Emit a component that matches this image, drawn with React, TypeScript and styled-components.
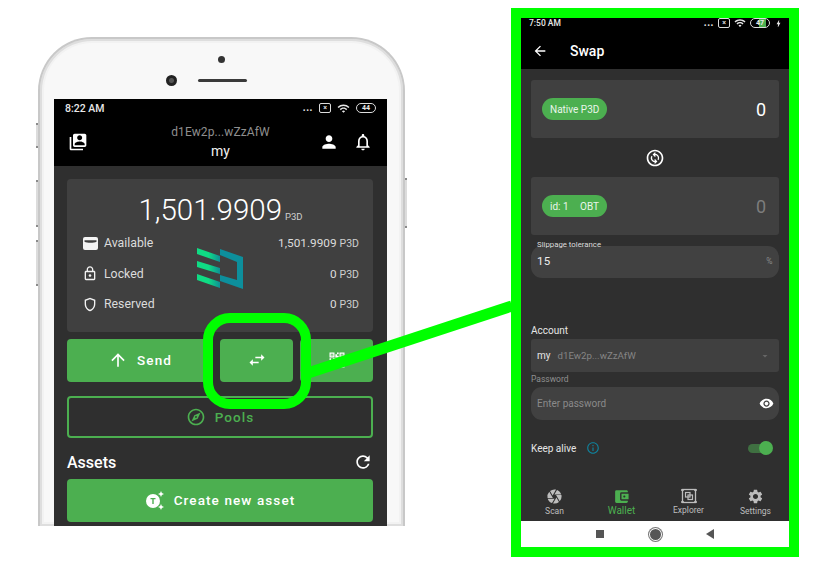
import React from "react";
import styled, { createGlobalStyle } from "styled-components";
import {
  MdSwitchAccount,
  MdPerson,
  MdOutlineNotifications,
  MdOutlineLock,
  MdOutlineShield,
  MdArrowUpward,
  MdSwapHoriz,
  MdOutlineExplore,
  MdRefresh,
  MdQrCode2,
  MdOutlineChangeCircle,
  MdArrowBack,
  MdVisibility,
  MdInfoOutline,
  MdCamera,
  MdAccountBalanceWallet,
  MdSettings,
  MdArrowDropDown,
  MdWifi,
  MdBolt,
} from "react-icons/md";

const green = "#4caf50";

const GlobalStyle = createGlobalStyle`
  html, body {
    margin: 0;
    background: #fff;
    font-family: Roboto, "Liberation Sans", sans-serif;
  }
`;

const Stage = styled.div`
  position: relative;
  width: 834px;
  height: 580px;
  overflow: hidden;
  display: flex;
  align-items: flex-start;
  background: #fff;
`;

const Phone = styled.div`
  position: relative;
  box-sizing: border-box;
  width: 367px;
  height: 489px;
  margin: 37px 0 0 38px;
  padding: 0 14px;
  border: 2px solid #c8c8c8;
  border-bottom: 0;
  border-radius: 54px 54px 0 0;
  background: #f8f8f8;
  box-shadow: inset 0 0 0 2px #dedede, inset 0 0 0 4px #f2f2f2;
`;

const SideKey = styled.span<{ $side: "left" | "right"; $top: number; $h: number }>`
  position: absolute;
  box-sizing: border-box;
  top: ${(p) => p.$top}px;
  ${(p) => p.$side}: -4px;
  width: 2px;
  height: ${(p) => p.$h}px;
  background: #dcdcdc;
  border-top: 2px solid #8a8a8a;
  border-bottom: 2px solid #8a8a8a;
`;

const Earpiece = styled.div`
  height: 60px;
  display: grid;
  grid-template-columns: 1fr;
  align-content: start;
  justify-items: center;
`;

const Dot = styled.span`
  width: 7px;
  height: 7px;
  margin-top: 17px;
  border-radius: 50%;
  background: #333;
`;

const SpeakerRow = styled.div`
  display: flex;
  align-items: center;
  gap: 21px;
  margin: 12px 0 0 -31px;
`;

const Camera = styled.span`
  width: 11px;
  height: 11px;
  border-radius: 50%;
  background: radial-gradient(circle, #555 0 2px, #222 3px);
`;

const Speaker = styled.span`
  width: 49px;
  height: 3px;
  border-radius: 2px;
  background: #3a3a3a;
`;

const Screen = styled.div`
  width: 333px;
  height: 427px;
  background: #2f2f2f;
  overflow: hidden;
`;

const TopBar = styled.div`
  background: #000;
  color: #fff;
`;

const StatusBar = styled.div<{ $size: number; $left: number; $right: number; $drop: number }>`
  display: flex;
  align-items: center;
  justify-content: space-between;
  box-sizing: border-box;
  height: ${(p) => p.$size + 6}px;
  padding: ${(p) => Math.max(p.$drop, 0)}px ${(p) => p.$right}px ${(p) => Math.max(-p.$drop, 0)}px
    ${(p) => p.$left}px;
  font-size: ${(p) => p.$size}px;
  font-weight: 500;
  color: #e8e8e8;
`;

const StatusIcons = styled.div<{ $gap: number }>`
  display: flex;
  align-items: center;
  gap: ${(p) => p.$gap}px;
`;

const Dots = styled.span`
  font-size: 10px;
  font-weight: 700;
  letter-spacing: 0.5px;
  line-height: 1;
`;

const XBox = styled.span`
  display: inline-flex;
  align-items: center;
  justify-content: center;
  width: 10px;
  height: 8px;
  border: 1px solid #ddd;
  border-radius: 2px;
  font-size: 7px;
  line-height: 1;
`;

const Battery = styled.span<{ $charging?: boolean }>`
  display: inline-flex;
  align-items: center;
  justify-content: center;
  width: 18px;
  height: 8px;
  border: 1px solid #ddd;
  border-radius: 5px;
  font-size: 7px;
  font-weight: 700;
  line-height: 1;
  background: ${(p) =>
    p.$charging ? `linear-gradient(90deg, transparent 45%, ${green} 45%, ${green} 85%, transparent 85%)` : "transparent"};
`;

const WalletHeader = styled.div`
  display: grid;
  grid-template-columns: 1fr auto 1fr;
  align-items: center;
  box-sizing: border-box;
  height: 50.5px;
  padding: 2px 14px 0;
`;

const HeaderSide = styled.div<{ $end?: boolean }>`
  display: flex;
  gap: 14px;
  justify-content: ${(p) => (p.$end ? "flex-end" : "flex-start")};
  color: #fff;
`;

const HeaderTitle = styled.div`
  text-align: center;
  line-height: 19px;
`;

const Address = styled.div`
  font-size: 12px;
  letter-spacing: 0.1px;
  color: #8f8f8f;
`;

const AccountName = styled.div`
  font-size: 14px;
  color: #f0f0f0;
`;

const WalletBody = styled.div`
  padding: 13px 14px 0 13px;
`;

const BalanceCard = styled.div`
  position: relative;
  box-sizing: border-box;
  height: 153px;
  padding: 14px 14px 0 15px;
  background: #404040;
  border-radius: 4px;
`;

const Total = styled.div`
  text-align: center;
  font-size: 29.5px;
  line-height: 34px;
  font-weight: 300;
  color: #fff;
  margin-bottom: 1px;
`;

const Unit = styled.span<{ $size?: number }>`
  margin-left: 3px;
  font-size: ${(p) => p.$size ?? 9.5}px;
  line-height: 1;
  font-weight: 400;
  color: #cfcfcf;
`;

const BalanceRow = styled.div`
  display: flex;
  align-items: center;
  height: 30.5px;
  font-size: 12.3px;
  color: #dcdcdc;
`;

const RowIcon = styled.span`
  display: inline-flex;
  justify-content: center;
  width: 16px;
  margin-right: 6px;
  color: #f2f2f2;
`;

const RowValue = styled.span`
  margin-left: auto;
  font-size: 11.8px;
`;

const LogoMark = styled.svg`
  position: absolute;
  left: 130px;
  top: 69px;
`;

const ButtonRow = styled.div`
  display: flex;
  gap: 7px;
  margin-top: 7px;
`;

const SolidButton = styled.div<{ $grow?: number }>`
  flex: ${(p) => p.$grow ?? 1} 1 0;
  display: flex;
  align-items: center;
  justify-content: center;
  gap: 9px;
  height: 42.5px;
  border-radius: 4px;
  background: ${green};
  color: #fff;
  font-size: 13.5px;
  font-weight: 500;
  letter-spacing: 1.1px;
`;

const OutlineButton = styled(SolidButton)`
  box-sizing: border-box;
  margin-top: 14px;
  border: 2px solid ${green};
  background: transparent;
  color: ${green};
`;

const AssetsHead = styled.div`
  display: flex;
  align-items: center;
  justify-content: space-between;
  box-sizing: border-box;
  height: 41px;
  padding-top: 7px;
  color: #fff;
  font-size: 16px;
  font-weight: 500;
`;

const RightPanel = styled.div`
  box-sizing: border-box;
  width: 288px;
  height: 549px;
  margin: 8px 0 0 106px;
  border: 10px solid #00ff00;
  background: #2f2f2f;
  display: flex;
  flex-direction: column;
`;

const SwapHeader = styled.div`
  display: flex;
  align-items: center;
  gap: 22px;
  height: 36.5px;
  padding: 0 11px;
  color: #fff;
  font-size: 14px;
  font-weight: 500;
`;

const SwapBody = styled.div`
  flex: 1;
  padding: 11px 10px 0;
`;

const TokenCard = styled.div`
  display: flex;
  align-items: center;
  justify-content: space-between;
  box-sizing: border-box;
  height: 58px;
  padding: 0 13px 0 11px;
  background: #404040;
  border-radius: 3px;
`;

const Pill = styled.span`
  box-sizing: border-box;
  display: inline-flex;
  justify-content: space-between;
  align-items: center;
  width: 65px;
  height: 22px;
  padding: 0 8px;
  border-radius: 11px;
  background: ${green};
  color: #e9f5ea;
  font-size: 10px;
  white-space: nowrap;
`;

const Amount = styled.span<{ $muted?: boolean }>`
  font-size: 18px;
  color: ${(p) => (p.$muted ? "#7d7d7d" : "#fff")};
`;

const SwapToggle = styled.div`
  display: flex;
  justify-content: center;
  align-items: center;
  height: 39px;
  color: #fff;
`;

const FloatingLabel = styled.div`
  position: absolute;
  top: -6px;
  left: 6px;
  font-size: 7.8px;
  letter-spacing: 0;
  color: #ddd;
`;

const RoundField = styled.div`
  position: relative;
  display: flex;
  align-items: center;
  justify-content: space-between;
  box-sizing: border-box;
  height: 33px;
  margin-top: 2px;
  padding: 0 5px 0 6px;
  background: #414141;
  border-radius: 11px;
  font-size: 10px;
  color: #8a8a8a;
`;

const SlippageField = styled(RoundField)`
  height: 32px;
  margin-top: 11px;
  padding-bottom: 2px;
  font-size: 11.5px;
  letter-spacing: 0.4px;
  color: #eee;
`;

const Percent = styled.span`
  font-size: 8.5px;
  color: #8a8a8a;
  margin-right: 1px;
`;

const FieldLabel = styled.div<{ $mt: number; $muted?: boolean }>`
  margin-top: ${(p) => p.$mt}px;
  font-size: ${(p) => (p.$muted ? 8.5 : 10)}px;
  line-height: 12px;
  color: ${(p) => (p.$muted ? "#8f8f8f" : "#e6e6e6")};
`;

const SelectBox = styled.div`
  display: flex;
  align-items: center;
  gap: 7px;
  box-sizing: border-box;
  height: 33px;
  margin-top: 2px;
  padding: 0 8px 0 6px;
  background: #404040;
  border-radius: 3px;
  font-size: 10px;
  color: #e6e6e6;
`;

const SelectAddress = styled.span`
  flex: 1;
  font-size: 9.7px;
  color: #858585;
`;

const KeepAlive = styled.div`
  display: flex;
  align-items: center;
  gap: 10px;
  height: 16px;
  margin-top: 20px;
  font-size: 10px;
  color: #e6e6e6;
`;

const Toggle = styled.span`
  position: relative;
  width: 20px;
  height: 9px;
  margin: 0 11px 0 auto;
  border-radius: 5px;
  background: #3f7041;

  &::after {
    content: "";
    position: absolute;
    top: -2.5px;
    right: -5px;
    width: 14px;
    height: 14px;
    border-radius: 50%;
    background: ${green};
  }
`;

const BottomNav = styled.div`
  display: grid;
  grid-template-columns: repeat(4, 1fr);
  box-sizing: border-box;
  height: 40px;
  padding-top: 7px;
`;

const NavItem = styled.div<{ $active?: boolean }>`
  display: flex;
  flex-direction: column;
  align-items: center;
  gap: ${(p) => (p.$active ? 0 : 1)}px;
  font-size: ${(p) => (p.$active ? 10 : 8.5)}px;
  color: ${(p) => (p.$active ? green : "#bdbdbd")};
  line-height: 11px;
`;

const SystemBar = styled.div`
  display: flex;
  align-items: center;
  justify-content: center;
  gap: 44.5px;
  height: 26px;
  background: #fff;
`;

const SquareKey = styled.span`
  width: 8px;
  height: 8px;
  background: #555;
`;

const HomeKey = styled.span`
  box-sizing: border-box;
  width: 13px;
  height: 13px;
  border-radius: 50%;
  background: #555;
  box-shadow: 0 0 0 1px #fff inset, 0 0 0 1px #777;
`;

const BackKey = styled.span`
  width: 0;
  height: 0;
  border-top: 5px solid transparent;
  border-bottom: 5px solid transparent;
  border-right: 8px solid #555;
`;

const Ring = styled.div`
  position: absolute;
  left: 203px;
  top: 313px;
  box-sizing: border-box;
  width: 108px;
  height: 96px;
  border: 10px solid #00ff00;
  border-radius: 27px;
`;

const Connector = styled.svg`
  position: absolute;
  left: 0;
  top: 0;
  pointer-events: none;
`;

const WalletGlyph = () => (
  <svg width="15" height="13" viewBox="0 0 15 13">
    <path d="M2 0h11a2 2 0 0 1 2 2v9a2 2 0 0 1-2 2H2a2 2 0 0 1-2-2V2a2 2 0 0 1 2-2z" fill="#f4f4f4" />
    <path d="M1.500 3.200h12v1.600c-2.500 1.400-9.500 1.400-12 0z" fill="#404040" />
  </svg>
);

const TokenGlyph = () => (
  <svg width="20" height="20" viewBox="0 0 20 20">
    <circle cx="8" cy="11" r="7" fill="#fff" />
    <path d="M5.500 8h5v1.300H8.700V14H7.300V9.300H5.500z" fill={green} />
    <path d="M16 1l.9 2.100L19 4l-2.100.9L16 7l-.9-2.100L13 4l2.100-.9zM16 14l.9 2.100L19 17l-2.100.9L16 20l-.9-2.100L13 17l2.100-.9z" fill="#fff" />
  </svg>
);

const ExplorerGlyph = () => (
  <svg width="16" height="16" viewBox="0 0 16 16" fill="none" stroke="#bdbdbd">
    <rect x="1.500" y="1.500" width="13" height="13" strokeWidth="1.300" />
    <rect x="4.500" y="4.500" width="4.500" height="4.500" strokeWidth="1.200" />
    <rect x="7" y="7" width="4.500" height="4.500" strokeWidth="1.200" />
    <path d="M0 2h3M13 2h3M0 14h3M13 14h3" strokeWidth="1.500" />
  </svg>
);

const balances = [
  { label: "Available", value: "1,501.9909", icon: <WalletGlyph /> },
  { label: "Locked", value: "0", icon: <MdOutlineLock size={17} /> },
  { label: "Reserved", value: "0", icon: <MdOutlineShield size={17} /> },
];

const App: React.FC = () => (
  <Stage>
    <GlobalStyle />
    <Phone>
      <SideKey $side="left" $top={84} $h={25} />
      <SideKey $side="left" $top={141} $h={47} />
      <SideKey $side="left" $top={201} $h={46} />
      <SideKey $side="right" $top={139} $h={50} />
      <Earpiece>
        <Dot />
        <SpeakerRow>
          <Camera />
          <Speaker />
        </SpeakerRow>
      </Earpiece>
      <Screen>
        <TopBar>
          <StatusBar $size={10.5} $left={11} $right={11} $drop={2}>
            <span>8:22 AM</span>
            <StatusIcons $gap={6}>
              <Dots>...</Dots>
              <XBox>×</XBox>
              <MdWifi size={13} />
              <Battery>44</Battery>
            </StatusIcons>
          </StatusBar>
          <WalletHeader>
            <HeaderSide>
              <MdSwitchAccount size={20} />
            </HeaderSide>
            <HeaderTitle>
              <Address>d1Ew2p...wZzAfW</Address>
              <AccountName>my</AccountName>
            </HeaderTitle>
            <HeaderSide $end>
              <MdPerson size={20} />
              <MdOutlineNotifications size={20} />
            </HeaderSide>
          </WalletHeader>
        </TopBar>
        <WalletBody>
          <BalanceCard>
            <Total>
              1,501.9909
              <Unit>P3D</Unit>
            </Total>
            {balances.map((row) => (
              <BalanceRow key={row.label}>
                <RowIcon>{row.icon}</RowIcon>
                {row.label}
                <RowValue>
                  {row.value}
                  <Unit $size={10.5}>P3D</Unit>
                </RowValue>
              </BalanceRow>
            ))}
            <LogoMark width="48" height="41" viewBox="0 0 48 41">
              <defs>
                <linearGradient id="bar" x1="0" x2="1" y1="0" y2="0">
                  <stop offset="0.5" stopColor="#0fdc84" />
                  <stop offset="1" stopColor="#0e8f96" />
                </linearGradient>
              </defs>
              <path d="M0 0l23 8v6L0 6zM0 13l23 7v6L0 19zM0 26l23 8v6L0 32z" fill="url(#bar)" />
              <path d="M23 1l23 8v32L23 33v-6l17 5V14L23 7z" fill="#0d8f9c" />
            </LogoMark>
          </BalanceCard>
          <ButtonRow>
            <SolidButton $grow={2}>
              <MdArrowUpward size={20} />
              Send
            </SolidButton>
            <SolidButton>
              <MdSwapHoriz size={20} />
            </SolidButton>
            <SolidButton>
              <MdQrCode2 size={20} />
            </SolidButton>
          </ButtonRow>
          <OutlineButton>
            <MdOutlineExplore size={20} />
            Pools
          </OutlineButton>
          <AssetsHead>
            Assets
            <MdRefresh size={20} />
          </AssetsHead>
          <SolidButton>
            <TokenGlyph />
            Create new asset
          </SolidButton>
        </WalletBody>
      </Screen>
    </Phone>

    <RightPanel>
      <TopBar>
        <StatusBar $size={8.5} $left={8} $right={6} $drop={-4}>
          <span>7:50 AM</span>
          <StatusIcons $gap={4}>
            <Dots>...</Dots>
            <XBox>×</XBox>
            <MdWifi size={12} />
            <Battery $charging>47</Battery>
            <MdBolt size={9} />
          </StatusIcons>
        </StatusBar>
        <SwapHeader>
          <MdArrowBack size={16} />
          Swap
        </SwapHeader>
      </TopBar>
      <SwapBody>
        <TokenCard>
          <Pill>Native P3D</Pill>
          <Amount>0</Amount>
        </TokenCard>
        <SwapToggle>
          <MdOutlineChangeCircle size={20} />
        </SwapToggle>
        <TokenCard>
          <Pill>
            <span>id: 1</span>
            <span>OBT</span>
          </Pill>
          <Amount $muted>0</Amount>
        </TokenCard>
        <SlippageField>
          <FloatingLabel>Slippage tolerance</FloatingLabel>
          15
          <Percent>%</Percent>
        </SlippageField>
        <FieldLabel $mt={47}>Account</FieldLabel>
        <SelectBox>
          my
          <SelectAddress>d1Ew2p...wZzAfW</SelectAddress>
          <MdArrowDropDown size={12} color="#666" />
        </SelectBox>
        <FieldLabel $mt={1} $muted>
          Password
        </FieldLabel>
        <RoundField>
          Enter password
          <MdVisibility size={15} color="#fff" />
        </RoundField>
        <KeepAlive>
          Keep alive
          <MdInfoOutline size={14} color="#10829c" />
          <Toggle />
        </KeepAlive>
      </SwapBody>
      <BottomNav>
        <NavItem>
          <MdCamera size={17} />
          Scan
        </NavItem>
        <NavItem $active>
          <MdAccountBalanceWallet size={17} />
          Wallet
        </NavItem>
        <NavItem>
          <ExplorerGlyph />
          Explorer
        </NavItem>
        <NavItem>
          <MdSettings size={17} />
          Settings
        </NavItem>
      </BottomNav>
      <SystemBar>
        <SquareKey />
        <HomeKey />
        <BackKey />
      </SystemBar>
    </RightPanel>

    <Connector width="834" height="580" viewBox="0 0 834 580">
      <line x1="302" y1="375" x2="512" y2="306" stroke="#00ff00" strokeWidth="11" />
    </Connector>
    <Ring />
  </Stage>
);

export default App;
